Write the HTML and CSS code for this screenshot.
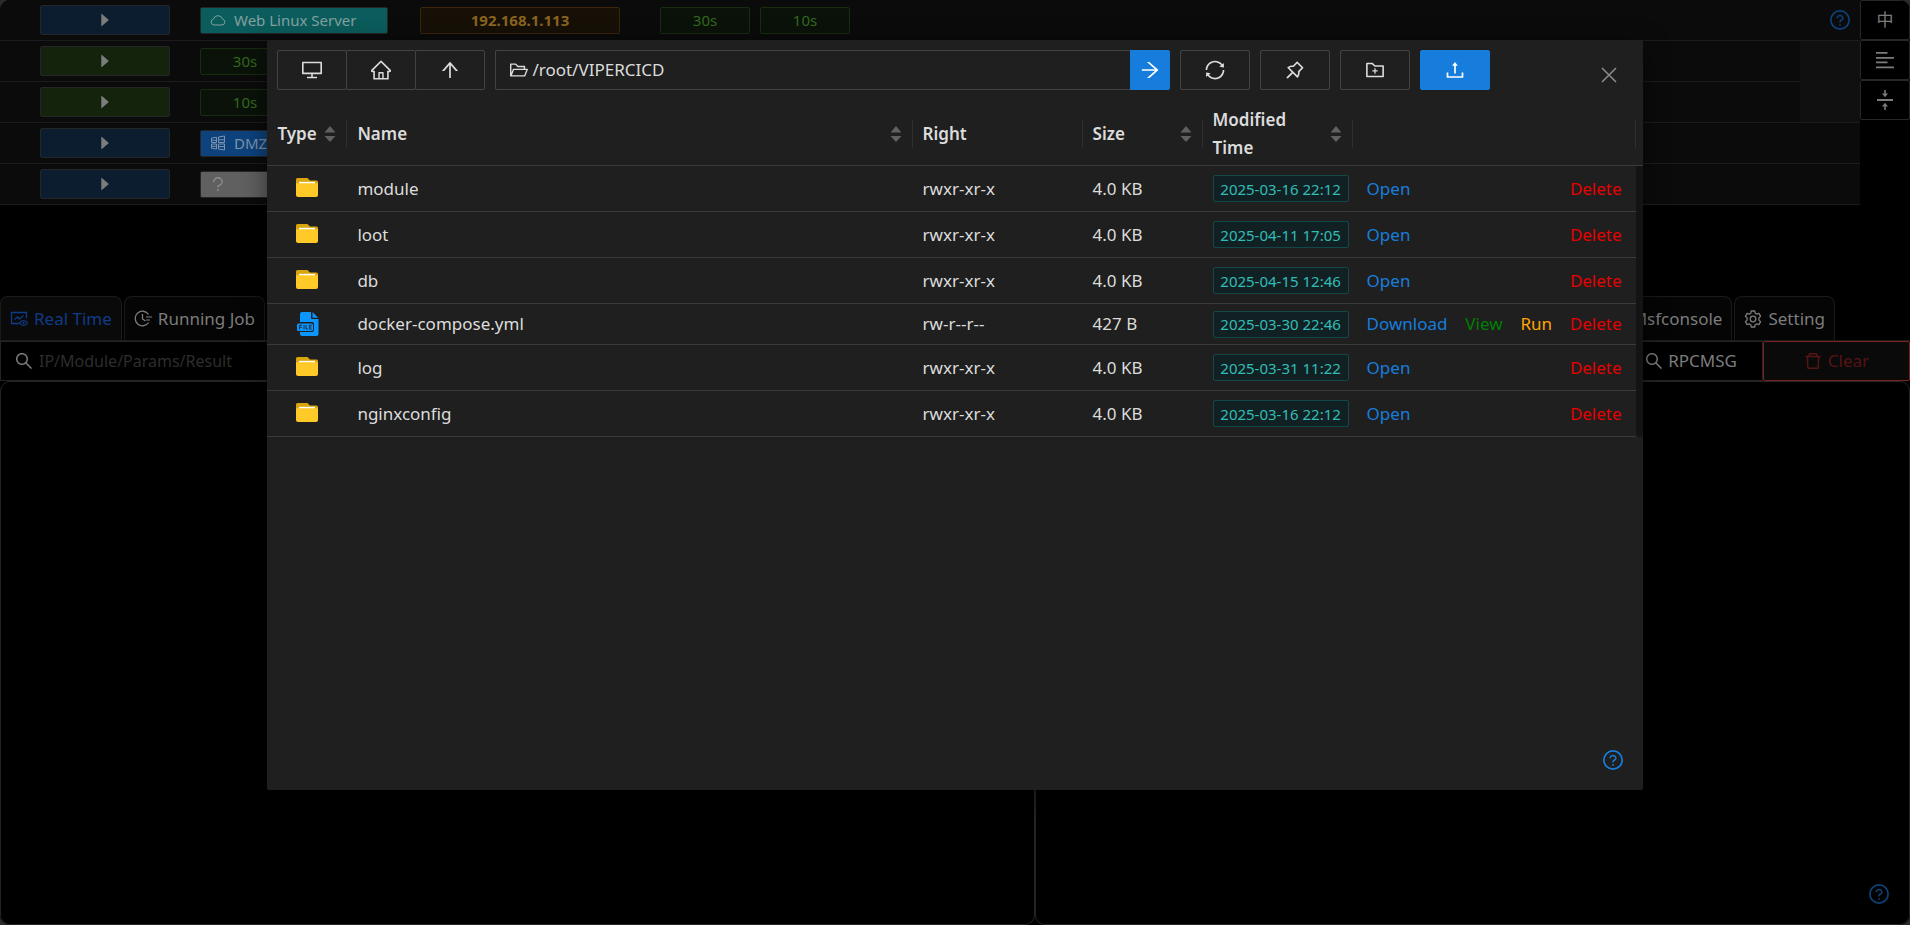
FILE: index.html
```html
<!DOCTYPE html>
<html lang="en">
<head>
<meta charset="utf-8">
<title>File Manager</title>
<link rel="stylesheet" href="styles.css">
</head>
<body>
<svg class="sprite" aria-hidden="true">
  <symbol id="caret" viewBox="0 0 1024 1024"><path d="M715.8 493.5L335 165.1c-14.2-12.2-35-1.2-35 18.5v656.8c0 19.7 20.8 30.7 35 18.5l380.8-328.4c10.9-9.4 10.9-27.6 0-37z"/></symbol>
  <symbol id="desktop" viewBox="64 64 896 896"><path d="M928 140H96c-17.700 0-32 14.300-32 32v496c0 17.700 14.300 32 32 32h380v112H304c-8.800 0-16 7.200-16 16v48c0 4.400 3.600 8 8 8h432c4.400 0 8-3.600 8-8v-48c0-8.800-7.200-16-16-16H548V700h380c17.700 0 32-14.300 32-32V172c0-17.700-14.300-32-32-32zm-40 488H136V212h752v416z"/></symbol>
  <symbol id="home" viewBox="64 64 896 896"><path d="M946.5 505L560.1 118.800l-25.900-25.900a31.500 31.500 0 00-44.400 0L77.500 505a63.900 63.900 0 00-18.800 46c.4 35.200 29.700 63.300 64.900 63.300h42.500V940h691.800V614.300h43.400c17.100 0 33.200-6.700 45.300-18.800a63.600 63.600 0 0018.700-45.300c0-17-6.700-33.100-18.800-45.200zM568 868H456V664h112v204zm217.900-325.700V868H632V640c0-22.100-17.900-40-40-40H432c-22.100 0-40 17.900-40 40v228H238.100V542.300h-96l370-369.700 23.100 23.100L882 542.300h-96.100z"/></symbol>
  <symbol id="up" viewBox="64 64 896 896"><path d="M868 545.5L536.1 163a31.960 31.960 0 00-48.300 0L156 545.500a7.970 7.970 0 006 13.200h81c4.600 0 9-2 12.100-5.500L474 300.900V864c0 4.400 3.600 8 8 8h60c4.400 0 8-3.600 8-8V300.900l218.900 252.300c3 3.500 7.400 5.500 12.100 5.500h81c6.800 0 10.500-8 6-13.200z"/></symbol>
  <symbol id="right" viewBox="64 64 896 896"><path d="M869 487.800L491.200 159.900c-2.900-2.500-6.600-3.900-10.500-3.900h-88.500c-7.400 0-10.800 9.200-5.200 14l350.200 304H152c-4.400 0-8 3.600-8 8v60c0 4.400 3.600 8 8 8h585.100L386.900 854c-5.600 4.900-2.200 14 5.200 14h91.500c1.900 0 3.800-.7 5.200-2L869 536.200a32.070 32.070 0 000-48.400z"/></symbol>
  <symbol id="sync" viewBox="64 64 896 896"><path d="M168 504.200c1-43.700 10-86.100 26.900-126 17.300-41 42.100-77.700 73.700-109.400S337 212.300 378 195c42.400-17.900 87.400-27 133.900-27s91.500 9.100 133.800 27A341.500 341.500 0 01755 268.800c9.900 9.900 19.200 20.400 27.800 31.400l-60.200 47a8 8 0 003 14.100l175.700 43c5 1.200 9.900-2.600 9.900-7.700l.8-180.900c0-6.700-7.700-10.500-12.900-6.300l-56.400 44.100C765.800 155.100 646.200 92 511.800 92 282.700 92 96.300 275.600 92 503.800a8 8 0 008 8.200h60c4.400 0 7.900-3.500 8-7.800zm756 7.800h-60c-4.400 0-7.900 3.500-8 7.800-1 43.700-10 86.100-26.900 126-17.300 41-42.100 77.800-73.700 109.400A342.450 342.450 0 01512.100 856a342.240 342.240 0 01-243.200-100.800c-9.900-9.900-19.200-20.400-27.800-31.400l60.200-47a8 8 0 00-3-14.100l-175.700-43c-5-1.200-9.900 2.600-9.900 7.700l-.7 181c0 6.700 7.700 10.500 12.900 6.300l56.400-44.100C258.200 868.900 377.800 932 512.200 932c229.200 0 415.500-183.700 419.800-411.800a8 8 0 00-8-8.200z"/></symbol>
  <symbol id="pin" viewBox="64 64 896 896"><path d="M878.300 392.100L631.900 145.700c-6.500-6.500-15-9.700-23.500-9.700s-17 3.200-23.500 9.700L423.800 306.900c-12.200-1.400-24.500-2-36.800-2-73.200 0-146.400 24.100-206.500 72.300a33.230 33.230 0 00-2.700 49.400l181.700 181.700-215.400 215.200a15.800 15.800 0 00-4.600 9.800l-3.400 37.200c-.9 9.400 6.600 17.400 15.900 17.400.5 0 1 0 1.500-.1l37.200-3.400c3.700-.3 7.200-2 9.800-4.600l215.400-215.400 181.700 181.700c6.500 6.500 15 9.700 23.500 9.700 9.700 0 19.300-4.200 25.900-12.400 56.300-70.300 79.700-158.300 70.200-243.400l161.100-161.100c12.900-12.800 12.900-33.800 0-46.800zM666.200 549.300l-24.500 24.500 3.800 34.400a259.920 259.920 0 01-30.400 153.900L262 408.800c12.900-7.100 26.300-13.100 40.300-17.900 27.200-9.400 55.700-14.100 84.700-14.100 9.600 0 19.300.5 28.900 1.600l34.400 3.800 24.500-24.500L608.500 224 800 415.500 666.200 549.300z"/></symbol>
  <symbol id="folder-add" viewBox="64 64 896 896"><path d="M484 443.100V528h-84.500c-4.100 0-7.500 3.100-7.500 7v42c0 3.800 3.400 7 7.500 7H484v84.900c0 3.900 3.200 7.100 7 7.100h42c3.900 0 7-3.200 7-7.100V584h84.500c4.100 0 7.500-3.200 7.500-7v-42c0-3.900-3.400-7-7.500-7H540v-84.900c0-3.900-3.100-7.100-7-7.100h-42c-3.800 0-7 3.200-7 7.100zm396-144.700H521L403.700 186.200a8.150 8.150 0 00-5.500-2.200H144c-17.700 0-32 14.300-32 32v592c0 17.700 14.300 32 32 32h736c17.700 0 32-14.300 32-32V330.400c0-17.700-14.300-32-32-32zM840 768H184V256h188.500l119.600 114.400H840V768z"/></symbol>
  <symbol id="upload" viewBox="64 64 896 896"><path d="M400 317.700h73.900V656c0 4.400 3.600 8 8 8h60c4.400 0 8-3.600 8-8V317.700H624c6.700 0 10.400-7.700 6.300-12.900L518.300 163a8 8 0 00-12.600 0l-112 141.700c-4.100 5.300-.4 13 6.300 13zM878 626h-60c-4.400 0-8 3.600-8 8v154H214V634c0-4.400-3.600-8-8-8h-60c-4.400 0-8 3.600-8 8v198c0 17.700 14.300 32 32 32h684c17.700 0 32-14.300 32-32V634c0-4.400-3.600-8-8-8z"/></symbol>
  <symbol id="folder-open" viewBox="64 64 896 896"><path d="M928 444H820V330.400c0-17.700-14.300-32-32-32H473L355.700 186.200a8.150 8.150 0 00-5.500-2.200H96c-17.700 0-32 14.300-32 32v592c0 17.700 14.300 32 32 32h698c13 0 24.800-7.900 29.700-20l134-332c1.500-3.800 2.300-7.900 2.300-12 0-17.700-14.300-32-32-32zM136 256h188.500l119.600 114.400H748V444H238c-13 0-24.800 7.900-29.700 20L136 643.200V256zm635.300 512H159l103.300-256h612.400L771.300 768z"/></symbol>
  <symbol id="search" viewBox="64 64 896 896"><path d="M909.600 854.500L649.900 594.800C690.200 542.700 712 479 712 412c0-80.200-31.300-155.400-87.900-212.100-56.600-56.700-132-87.900-212.100-87.900s-155.500 31.300-212.100 87.900C143.200 256.500 112 331.800 112 412c0 80.100 31.300 155.500 87.900 212.100C256.500 680.800 331.800 712 412 712c67 0 130.600-21.800 182.700-62l259.700 259.600a8.200 8.200 0 0011.600 0l43.600-43.500a8.200 8.200 0 000-11.600zM570.400 570.400C528 612.700 471.800 636 412 636s-116-23.300-158.400-65.600C211.300 528 188 471.800 188 412s23.300-116.100 65.600-158.400C296 211.300 352.200 188 412 188s116.100 23.200 158.400 65.600S636 352.200 636 412s-23.300 116.100-65.600 158.400z"/></symbol>
  <symbol id="trash" viewBox="64 64 896 896"><path d="M360 184h-8c4.400 0 8-3.600 8-8v8h304v-8c0 4.400 3.600 8 8 8h-8v72h72v-80c0-35.300-28.700-64-64-64H352c-35.300 0-64 28.700-64 64v80h72v-72zm504 72H160c-17.700 0-32 14.300-32 32v32c0 4.400 3.600 8 8 8h60.400l24.700 523c1.600 34.100 29.800 61 63.900 61h454c34.200 0 62.300-26.800 63.900-61l24.700-523H888c4.400 0 8-3.600 8-8v-32c0-17.700-14.300-32-32-32zM731.300 840H292.700l-24.200-512h487l-24.200 512z"/></symbol>
  <symbol id="help" viewBox="64 64 896 896"><circle cx="512" cy="512" r="410" fill="none" stroke="currentColor" stroke-width="76"/><path d="M623.600 316.700C593.600 290.400 554 276 512 276s-81.600 14.500-111.600 40.700C369.200 344 352 380.700 352 420v7.600c0 4.400 3.600 8 8 8h48c4.400 0 8-3.600 8-8V420c0-44.100 43.100-80 96-80s96 35.900 96 80c0 31.100-22 59.600-56.100 72.700-21.200 8.100-39.200 22.300-52.100 40.900-13.100 19-19.900 41.800-19.900 64.900V620c0 4.400 3.600 8 8 8h48c4.400 0 8-3.600 8-8v-22.700a48.300 48.300 0 0130.900-44.800c59-22.700 97.100-74.700 97.100-132.500.1-39.300-17.100-76-48.300-103.300zM472 732a40 40 0 1080 0 40 40 0 10-80 0z"/></symbol>
  <symbol id="question" viewBox="64 64 896 896"><path d="M764 280.900c-14-30.600-33.900-58.100-59.300-81.600C653.100 151.400 584.600 125 512 125s-141.100 26.400-192.700 74.200c-25.400 23.600-45.300 51-59.300 81.700-14.600 32-22 65.900-22 100.900v27c0 6.200 5 11.200 11.200 11.200h54c6.200 0 11.200-5 11.200-11.200v-27c0-99.500 88.600-180.400 197.600-180.400s197.600 80.900 197.600 180.400c0 40.800-14.500 79.200-42 111.200-27.200 31.700-65.600 54.400-108.100 64-24.300 5.500-46.200 19.200-61.700 38.800a110.850 110.850 0 00-23.900 68.600v31.400c0 6.200 5 11.200 11.200 11.200h54c6.200 0 11.200-5 11.200-11.200v-31.400c0-15.700 10.900-29.500 26-32.900 58.400-13.200 111.400-44.700 149.300-88.700 19.100-22.300 34-47.100 44.300-74 10.700-27.900 16.100-57.200 16.100-87 0-35-7.400-69-22-100.900zM512 787c-30.900 0-56 25.100-56 56s25.100 56 56 56 56-25.100 56-56-25.100-56-56-56z"/></symbol>
  <symbol id="cloud" viewBox="0 0 16 16"><path d="M4 13a3 3 0 0 1-.6-5.900 4.800 4.800 0 0 1 9.200 0A3 3 0 0 1 12 13z" fill="none" stroke="currentColor"/></symbol>
  <symbol id="windows" viewBox="0 0 16 16"><path d="M1.500 3.100l5-.8v5.200h-5zM8.500 2l6-1v6.500h-6zM1.500 9h5v5l-5-.8zM8.500 9h6v6l-6-1zM1.500 5.300h5M8.500 4.800h6M1.500 11.300h5M8.500 11.600h6" fill="none" stroke="currentColor"/></symbol>
  <symbol id="close" viewBox="0 0 16 16"><path d="M1 1l14 14M15 1L1 15" fill="none" stroke="currentColor" stroke-width="1.500"/></symbol>
  <symbol id="align-left" viewBox="0 0 18 18"><path d="M0 1h11.500v1.700H0zM0 6h18v1.700H0zM0 10.500h11.500v1.700H0zM0 15.500h18v1.700H0z"/></symbol>
  <symbol id="middle" viewBox="0 0 18 20"><path d="M1 9h16v2H1zM8.200 0h1.600v3.500H12L9 7.300 6 3.500h2.200zM8.200 20h1.600v-3.500H12L9 12.700l-3 3.800h2.200z"/></symbol>
  <symbol id="monitor" viewBox="0 0 18 18"><path d="M9 13.500H1.500v-11h15v6M4.500 9.500l3-2.500 2 2 4-3.500" fill="none" stroke="currentColor" stroke-width="1.300"/><path d="M9.500 13c1-1.700 2.300-2.400 4-2.400s3 .7 4 2.400c-1 1.700-2.300 2.400-4 2.400s-3-.7-4-2.400z" fill="none" stroke="currentColor" stroke-width="1.200"/><circle cx="13.500" cy="13" r="1"/></symbol>
  <symbol id="clock" viewBox="0 0 18 18"><path d="M14.600 4.500A7.300 7.300 0 1 0 14.600 12.500M8.500 4v5l3 2" fill="none" stroke="currentColor" stroke-width="1.300"/><path d="M12 7h6M12 10h4" fill="none" stroke="currentColor" stroke-width="1.200"/></symbol>
  <symbol id="gear" viewBox="0 0 18 18"><path d="M7.300 1h3.400l.5 2.200 1.500.9 2.200-.7 1.700 2.900-1.700 1.600v2.200l1.700 1.600-1.700 2.900-2.200-.7-1.500.9-.5 2.200H7.300l-.5-2.200-1.500-.9-2.200.7-1.700-2.900 1.700-1.600V7.900L1.400 6.300l1.700-2.900 2.200.7 1.500-.9z" fill="none" stroke="currentColor" stroke-width="1.300" stroke-linejoin="round"/><circle cx="9" cy="9" r="2.800" fill="none" stroke="currentColor" stroke-width="1.300"/></symbol>
  <symbol id="folder" viewBox="0 0 24 24"><path d="M1 5V2.500A1.500 1.500 0 0 1 2.500 1h10L15 3.500h6.500A1.500 1.500 0 0 1 23 5v6H1z" fill="#d9a40c"/><path d="M4 4.800h16v3H4z" fill="#fff"/><path d="M1 6.300h22v11.700a2 2 0 0 1-2 2H3a2 2 0 0 1-2-2z" fill="#ffca28"/></symbol>
  <symbol id="file" viewBox="0 0 24 24"><path d="M7 0h9v6a1 1 0 0 0 1 1h6.500v15a2 2 0 0 1-2 2H7a2 2 0 0 1-2-2v-2h12a2 2 0 0 0 2-2v-6a2 2 0 0 0-2-2H5V2a2 2 0 0 1 2-2z" fill="#0a95ff"/><path d="M17.500 0l5.700 5.800h-5.700z" fill="#0a95ff"/><rect x="2" y="11.500" width="16" height="7.500" rx="1.500" fill="#0a95ff"/><path d="M4.500 17.500v-4.300h2.500M4.500 15.300h2.300M9 13v4.500M11 13v4h2M16.800 13.300h-2.400v3.800h2.400M14.400 15.200h2" fill="none" stroke="#17314a" stroke-width="1"/></symbol>
  <symbol id="sorter" viewBox="0 0 12 18"><path d="M6 1l5.500 6.500H.5zM6 17l5.500-6H.5z"/></symbol>
</svg>

<div class="app">
  <section class="hosts">
    <div class="host-list">
      <div class="host-row">
        <button class="play" aria-label="Open host"><svg class="icon"><use href="#caret"/></svg></button>
        <span class="chip chip-teal"><svg class="icon"><use href="#cloud"/></svg>Web Linux Server</span>
        <span class="chip chip-ip">192.168.1.113</span>
        <span class="delays"><span class="chip chip-green">30s</span><span class="chip chip-green">10s</span></span>
        <button class="help host-help" aria-label="Help"><svg class="icon"><use href="#help"/></svg></button>
      </div>
      <div class="session-group">
        <div class="sessions">
          <div class="host-row"><button class="play play-green" aria-label="Open session"><svg class="icon"><use href="#caret"/></svg></button><span class="chip chip-green">30s</span></div>
          <div class="host-row"><button class="play play-green" aria-label="Open session"><svg class="icon"><use href="#caret"/></svg></button><span class="chip chip-green">10s</span></div>
        </div>
        <div class="session-side"></div>
      </div>
      <div class="host-row">
        <button class="play" aria-label="Open host"><svg class="icon"><use href="#caret"/></svg></button>
        <span class="chip chip-blue"><svg class="icon"><use href="#windows"/></svg>DMZ</span>
      </div>
      <div class="host-row">
        <button class="play" aria-label="Open host"><svg class="icon"><use href="#caret"/></svg></button>
        <span class="chip chip-gray"><svg class="icon icon-lg"><use href="#question"/></svg></span>
      </div>
    </div>
    <div class="side-tools">
      <button lang="zh">中</button>
      <button aria-label="Align"><svg class="icon"><use href="#align-left"/></svg></button>
      <button aria-label="Collapse"><svg class="icon icon-lg"><use href="#middle"/></svg></button>
    </div>
  </section>

  <section class="panels">
    <div class="panel">
      <div class="tabs">
        <button class="tab active"><svg class="icon"><use href="#monitor"/></svg>Real Time</button>
        <button class="tab"><svg class="icon"><use href="#clock"/></svg>Running Job</button>
      </div>
      <label class="search"><svg class="icon"><use href="#search"/></svg><input type="text" aria-label="Search results" placeholder="IP/Module/Params/Result"></label>
      <div class="output"></div>
    </div>
    <div class="panel">
      <div class="tabs tabs-end">
        <button class="tab">Msfconsole</button>
        <button class="tab"><svg class="icon"><use href="#gear"/></svg>Setting</button>
      </div>
      <div class="filters">
        <button class="rpc"><svg class="icon"><use href="#search"/></svg>RPCMSG</button>
        <button class="clear"><svg class="icon"><use href="#trash"/></svg>Clear</button>
      </div>
      <div class="output output-end"><button class="help" aria-label="Help"><svg class="icon"><use href="#help"/></svg></button></div>
    </div>
  </section>
</div>

<div class="modal" role="dialog" aria-label="File manager">
  <div class="toolbar">
    <div class="group">
      <button class="tool" aria-label="Disks"><svg class="icon icon-lg"><use href="#desktop"/></svg></button>
      <button class="tool" aria-label="Home"><svg class="icon icon-lg"><use href="#home"/></svg></button>
      <button class="tool" aria-label="Up"><svg class="icon icon-lg"><use href="#up"/></svg></button>
    </div>
    <div class="path">
      <label class="path-box"><svg class="icon"><use href="#folder-open"/></svg><input type="text" aria-label="Path" value="/root/VIPERCICD"></label>
      <button class="go" aria-label="Go"><svg class="icon"><use href="#right"/></svg></button>
    </div>
    <button class="tool" aria-label="Refresh"><svg class="icon icon-lg"><use href="#sync"/></svg></button>
    <button class="tool" aria-label="Pin"><svg class="icon icon-lg"><use href="#pin"/></svg></button>
    <button class="tool" aria-label="New folder"><svg class="icon icon-lg"><use href="#folder-add"/></svg></button>
    <button class="tool primary" aria-label="Upload"><svg class="icon icon-lg"><use href="#upload"/></svg></button>
    <button class="close" aria-label="Close"><svg class="icon"><use href="#close"/></svg></button>
  </div>

  <table class="files">
    <colgroup><col class="c-type"><col><col class="c-right"><col class="c-size"><col class="c-time"><col class="c-act"><col class="c-bar"></colgroup>
    <thead>
      <tr>
        <th><div class="head">Type<svg class="sorter"><use href="#sorter"/></svg></div></th>
        <th><div class="head">Name<svg class="sorter"><use href="#sorter"/></svg></div></th>
        <th><div class="head">Right</div></th>
        <th><div class="head">Size<svg class="sorter"><use href="#sorter"/></svg></div></th>
        <th><div class="head">Modified Time<svg class="sorter"><use href="#sorter"/></svg></div></th>
        <th><div class="head"></div></th>
        <td class="corner"></td>
      </tr>
    </thead>
    <tbody>
      <tr><td class="type"><svg class="kind"><use href="#folder"/></svg></td><td>module</td><td>rwxr-xr-x</td><td>4.0 KB</td><td><span class="time">2025-03-16 22:12</span></td><td><div class="acts"><a href="#">Open</a><a href="#" class="del">Delete</a></div></td><td class="bar" rowspan="6"></td></tr>
      <tr><td class="type"><svg class="kind"><use href="#folder"/></svg></td><td>loot</td><td>rwxr-xr-x</td><td>4.0 KB</td><td><span class="time">2025-04-11 17:05</span></td><td><div class="acts"><a href="#">Open</a><a href="#" class="del">Delete</a></div></td></tr>
      <tr><td class="type"><svg class="kind"><use href="#folder"/></svg></td><td>db</td><td>rwxr-xr-x</td><td>4.0 KB</td><td><span class="time">2025-04-15 12:46</span></td><td><div class="acts"><a href="#">Open</a><a href="#" class="del">Delete</a></div></td></tr>
      <tr class="file"><td class="type"><svg class="kind"><use href="#file"/></svg></td><td>docker-compose.yml</td><td>rw-r--r--</td><td>427 B</td><td><span class="time">2025-03-30 22:46</span></td><td><div class="acts"><a href="#">Download</a><a href="#" class="view">View</a><a href="#" class="run">Run</a><a href="#" class="del">Delete</a></div></td></tr>
      <tr><td class="type"><svg class="kind"><use href="#folder"/></svg></td><td>log</td><td>rwxr-xr-x</td><td>4.0 KB</td><td><span class="time">2025-03-31 11:22</span></td><td><div class="acts"><a href="#">Open</a><a href="#" class="del">Delete</a></div></td></tr>
      <tr><td class="type"><svg class="kind"><use href="#folder"/></svg></td><td>nginxconfig</td><td>rwxr-xr-x</td><td>4.0 KB</td><td><span class="time">2025-03-16 22:12</span></td><td><div class="acts"><a href="#">Open</a><a href="#" class="del">Delete</a></div></td></tr>
    </tbody>
  </table>
  <button class="help help-bright" aria-label="Help"><svg class="icon"><use href="#help"/></svg></button>
</div>
</body>
</html>
```
FILE: styles.css
```css
* { box-sizing: border-box; }
html { background: #2b2b2b; }
body {
  margin: 0;
  font: 17px/28px "Segoe UI", "Noto Sans", "Noto Sans CJK SC", sans-serif;
  color: #dcdcdc;
}
button, input { font: inherit; color: inherit; margin: 0; padding: 0; background: none; border: 0; }
button { display: flex; align-items: center; justify-content: center; }
a { text-decoration: none; color: #177ddc; }
.sprite { display: none; }
.icon { width: 18px; height: 18px; flex: none; fill: currentColor; }
.icon-lg { width: 20px; height: 20px; }

/* background workspace */
.app {
  display: flex;
  flex-direction: column;
  min-height: 100vh;
  background: #000;
  border-radius: 10px;
  overflow: hidden;
  color: #7c7c7c;
}
.hosts { display: flex; height: 296px; flex: none; }
.host-list { flex: 1; }
.host-row {
  display: flex;
  align-items: center;
  height: 41px;
  padding: 0 10px 0 40px;
  background: #0b0b0b;
  border-bottom: 1px solid #1c1c1c;
}
.play {
  width: 130px;
  height: 30px;
  margin-right: 30px;
  background: #0c1d30;
  border: 1px solid #242628;
  border-radius: 2px;
}
.play-green { background: #14240c; }
.chip {
  display: flex;
  align-items: center;
  justify-content: center;
  height: 27px;
  border: 1px solid;
  border-radius: 2px;
  font-size: 15px;
}
.chip .icon { width: 16px; height: 16px; }
.chip-teal, .chip-blue, .chip-gray { width: 188px; justify-content: flex-start; gap: 8px; padding: 0 9px; border-color: #242628; }
.chip-teal { background: #0b5c5c; color: #84a0a0; }
.chip-blue { background: #0d427c; color: #7c93ad; }
.chip-gray { background: #606060; color: #8a8a8a; }
.chip-ip { width: 200px; margin: 0 40px 0 32px; background: #161007; border-color: #3c250c; color: #8a6420; font-weight: 700; }
.chip-green { width: 90px; background: #0a120a; border-color: #182c10; color: #32691d; }
.delays { display: flex; gap: 10px; }
.help { color: #0c4278; }
.help .icon { width: 20px; height: 20px; }
.host-help { margin-left: auto; }
.session-group { display: flex; border-bottom: 1px solid #1c1c1c; }
.sessions { flex: 1; }
.sessions .host-row:last-child { height: 40px; border-bottom: 0; }
.session-side { width: 60px; background: #101010; }
.side-tools { width: 50px; }
.side-tools button { width: 100%; height: 40px; border: 1px solid #272727; border-radius: 2px; font-size: 17px; }

.panels { flex: 1; display: grid; grid-template-columns: 1035fr 875fr; }
.panel { display: flex; flex-direction: column; }
.tabs { display: flex; gap: 2px; height: 45px; border-bottom: 1px solid #1c1c1c; }
.tabs-end { justify-content: flex-end; padding-right: 75px; }
.tab {
  gap: 6px;
  padding: 0 9px;
  background: #050505;
  border: 1px solid #1a1a1a;
  border-bottom: 0;
  border-radius: 8px 8px 0 0;
}
.tab.active { background: #0a0a0a; color: #0f3c86; }
.search {
  display: flex;
  align-items: center;
  gap: 6px;
  height: 40px;
  padding: 0 14px;
  border: 1px solid #242424;
}
.search input { flex: 1; font-size: 16px; }
.search input::placeholder { color: #2d2d2d; opacity: 1; }
.filters { display: flex; justify-content: flex-end; height: 40px; }
.rpc { gap: 5px; padding: 0 25px; border: 1px solid #242424; }
.clear { gap: 6px; width: 147px; background: #0a0a0a; border: 1px solid #7c2222; border-radius: 2px; color: #561414; }
.output { flex: 1; border: 1px solid #242424; border-radius: 10px; }
.output-end { display: flex; align-items: flex-end; justify-content: flex-end; padding: 20px; }

/* file manager dialog */
.modal {
  position: absolute;
  top: 40px;
  left: 14%;
  width: 72%;
  min-height: 750px;
  display: flex;
  flex-direction: column;
  background: #1f1f1f;
  border-radius: 2px;
  box-shadow: 0 6px 24px rgba(0, 0, 0, 0.5);
}
.toolbar { display: flex; gap: 10px; padding: 10px 24px 13px 10px; }
.group { display: flex; }
.tool { width: 70px; height: 40px; border: 1px solid #434343; border-radius: 2px; }
.group .tool + .tool { margin-left: -1px; }
.path { flex: 1; display: flex; }
.path-box {
  flex: 1;
  display: flex;
  align-items: center;
  gap: 4px;
  padding: 0 14px;
  border: 1px solid #434343;
  border-right: 0;
  border-radius: 2px 0 0 2px;
}
.path-box input { flex: 1; }
.go { width: 40px; background: #177ddc; color: #fff; border-radius: 0 2px 2px 0; }
.go .icon { width: 20px; height: 20px; }
.primary { background: #177ddc; border-color: #177ddc; color: #fff; }
.close { width: 20px; margin: 10px 0 0 99px; color: #8c8c8c; align-items: center; height: 30px; }
.close .icon { width: 16px; height: 16px; }

.files { width: 100%; table-layout: fixed; border-collapse: separate; border-spacing: 0; }
.c-type { width: 80px; }
.c-right { width: 170px; }
.c-size { width: 120px; }
.c-time { width: 150px; }
.c-act { width: 283px; }
.c-bar { width: 7px; }
.files th, .files td { padding: 0 10px; text-align: left; border-bottom: 1px solid #3a3a3a; }
.files th { height: 63px; padding-right: 0; font-weight: 600; }
.head {
  display: flex;
  align-items: center;
  justify-content: space-between;
  min-height: 28px;
  padding-right: 11px;
  position: relative;
}
.head::after { content: ""; position: absolute; right: 0; top: calc(50% - 14px); height: 28px; border-right: 1px solid #303030; }
.sorter { width: 12px; height: 18px; flex: none; fill: #606060; }
.files tbody td { height: 46px; }
.files tbody .file td { height: 41px; }
.files .type { text-align: center; }
.kind { width: 24px; height: 24px; display: block; margin: 0 auto; }
.files .corner { padding: 0; }
.files tbody .bar { padding: 0; background: #141414; border: 0; border-radius: 0 0 4px 4px; }
.time {
  display: flex;
  align-items: center;
  justify-content: center;
  width: 136px;
  height: 27px;
  background: #112123;
  border: 1px solid #144848;
  border-radius: 2px;
  color: #33bcb7;
  font-size: 15px;
}
.files td:nth-child(5) { padding-right: 0; }
.acts { display: flex; justify-content: space-between; padding: 0 4px; }
.del { color: #e60000; }
.view { color: #008000; }
.run { color: #ffa500; }
.help-bright { color: #177ddc; margin: auto 20px 20px auto; }
```
